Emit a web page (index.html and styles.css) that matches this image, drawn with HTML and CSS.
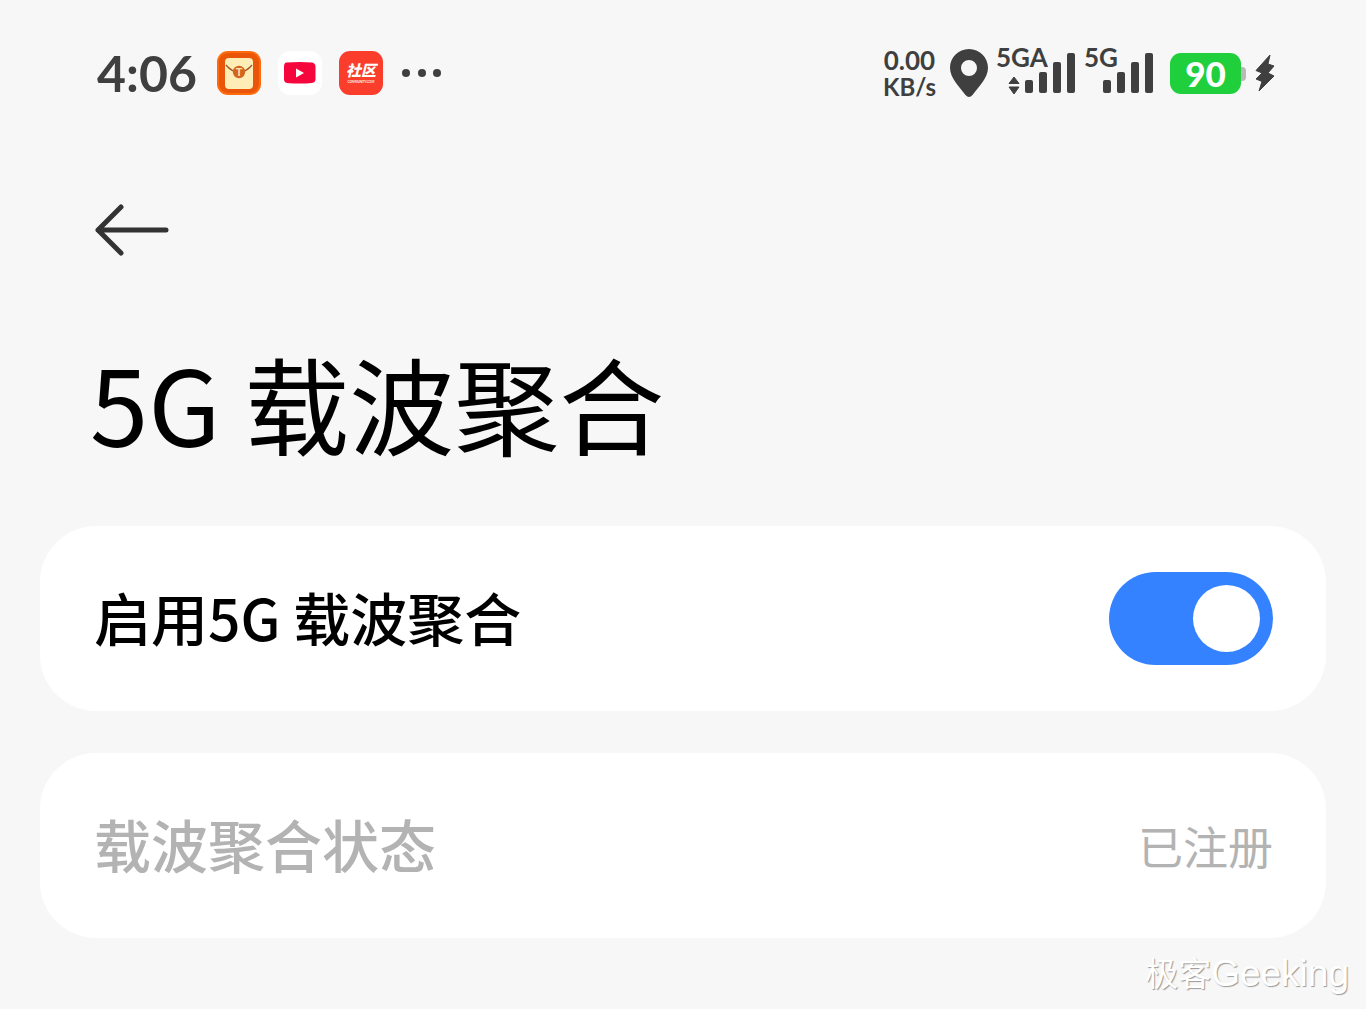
FILE: index.html
```html
<!DOCTYPE html>
<html lang="zh-CN">
<head>
  <meta charset="UTF-8" />
  <meta name="viewport" content="width=device-width, initial-scale=1" />
  <title>5G 载波聚合</title>
  <link rel="stylesheet" href="styles.css">
</head>
<body>

<div class="status-bar">
  <div class="status-left">
    <span class="time">4:06</span>
    <div class="app-icons">
      <svg width="44" height="44" viewBox="0 0 44 44" aria-hidden="true">
        <rect width="44" height="44" rx="11" fill="#ff6a0c"/>
        <rect x="2" y="2" width="40" height="40" rx="9" fill="#e9560a"/>
        <rect x="8" y="7" width="28" height="31" rx="4" fill="#ffedb8"/>
        <path d="M9 14c4 5 8 7 13 7s9-2 13-7" fill="none" stroke="#9a5a28" stroke-width="1.3"/>
        <circle cx="22" cy="21" r="6.2" fill="#d2661c"/>
        <text x="22" y="25" text-anchor="middle" font-size="11" fill="#ffe2ae">T</text>
      </svg>
      <svg width="44" height="44" viewBox="0 0 44 44" aria-hidden="true">
        <rect width="44" height="44" rx="12" fill="#fff"/>
        <path d="M8 11.5Q22 10.5 34 11.5Q37.5 12 37.5 16V28Q37.5 31.5 34 32Q22 33 9 32Q6 31.500 6 28V16Q6 12 8 11.5z" fill="#f5063c"/>
        <path d="M18 17.5v9l8-4.500z" fill="#fff"/>
      </svg>
      <div class="community">
        <b>社区</b>
        <small>COMMUNITY.COM</small>
      </div>
    </div>
    <svg width="40" height="8" viewBox="0 0 40 8" fill="#3f3f3f" aria-hidden="true">
      <circle cx="4" cy="4" r="4"/><circle cx="20" cy="4" r="4"/><circle cx="35" cy="4" r="4"/>
    </svg>
  </div>

  <div class="status-right">
    <div class="speed"><span>0.00</span><span>KB/s</span></div>
    <svg class="pin" width="38" height="48" viewBox="0 0 38 48" aria-hidden="true">
      <path fill-rule="evenodd" d="M19 0C8.5 0 0 8.3 0 18.8C0 29 9.500 38 15.5 46Q19 50 22.5 46C28.5 38 38 29 38 18.8C38 8.3 29.5 0 19 0zM19 11a8 8 0 1 1 0 16a8 8 0 1 1 0-16z" fill="#3f3f3f"/>
    </svg>
    <div class="signal signal-main">
      <span>5GA</span>
      <svg width="68" height="42" viewBox="0 0 68 42" fill="#3f3f3f" aria-hidden="true">
        <path d="M1 31.5L6 25l5 6.500zM1 35h10l-5 7z" stroke="#3f3f3f" stroke-width="1" stroke-linejoin="round"/>
        <rect x="17" y="28" width="8" height="13" rx="2"/>
        <rect x="31" y="20" width="8" height="21" rx="2"/>
        <rect x="45" y="10" width="8" height="31" rx="2"/>
        <rect x="59" y="1" width="8" height="40" rx="2"/>
      </svg>
    </div>
    <div class="signal">
      <span>5G</span>
      <svg width="52" height="42" viewBox="0 0 52 42" fill="#3f3f3f" aria-hidden="true">
        <rect x="1" y="28" width="8" height="13" rx="2"/>
        <rect x="15" y="20" width="8" height="21" rx="2"/>
        <rect x="29" y="10" width="8" height="31" rx="2"/>
        <rect x="43" y="1" width="8" height="40" rx="2"/>
      </svg>
    </div>
    <div class="battery"><span>90</span></div>
    <svg width="20" height="40" viewBox="0 0 20 40" aria-hidden="true">
      <path d="M15 2L1 17.5l6 2.500L1 26l6 2.500L4 38L19 23l-6-3L19 13l-6-2z" fill="#3f3f3f" stroke="#3f3f3f" stroke-width="1" stroke-linejoin="round"/>
    </svg>
  </div>
</div>

<header>
  <button class="back" type="button" aria-label="返回">
    <svg width="74" height="52" viewBox="0 0 74 52" fill="none" stroke="#333" stroke-width="5" stroke-linecap="round" stroke-linejoin="round" aria-hidden="true">
      <path d="M26 3L3 26l23 23M3 26h68"/>
    </svg>
  </button>
  <h1>5G 载波聚合</h1>
</header>

<main>
  <div class="card">
    <label for="ca-switch">启用5G 载波聚合</label>
    <input class="switch" type="checkbox" role="switch" id="ca-switch" checked>
  </div>
  <div class="card disabled">
    <span>载波聚合状态</span>
    <span class="value">已注册</span>
  </div>
</main>

<footer>极客<span>Geeking</span></footer>

</body>
</html>
```
FILE: styles.css
```css
* {
  box-sizing: border-box;
}

body {
  margin: 0;
  background: #f7f7f7;
  color: #000;
  font-family: 'Noto Sans CJK SC', sans-serif;
}

.status-bar {
  display: flex;
  justify-content: space-between;
  align-items: center;
  height: 146px;
  padding: 0 91px 0 97px;
  color: #3f3f3f;
  font-family: 'Lato', 'Noto Sans CJK SC', sans-serif;
  font-weight: bold;
}

.status-left,
.status-right,
.app-icons {
  display: flex;
  align-items: center;
}

.time {
  font-size: 50px;
  line-height: 60px;
}

.app-icons {
  gap: 17px;
  margin: 0 19px 0 20px;
}

.community {
  display: flex;
  flex-direction: column;
  align-items: center;
  justify-content: center;
  width: 44px;
  height: 44px;
  border-radius: 11px;
  background: #fb3d2c;
  color: #fff;
  font-style: italic;
}

.community b {
  font-size: 15px;
  line-height: 18px;
}

.community small {
  font-size: 3px;
  line-height: 6px;
  font-style: normal;
}

.speed {
  display: flex;
  flex-direction: column;
  align-items: center;
  font-size: 26px;
  line-height: 28px;
}

.speed span + span {
  font-size: 24px;
  line-height: 26px;
}

.pin {
  margin: 0 8px 0 14px;
}

.signal {
  position: relative;
  display: flex;
  justify-content: flex-end;
  width: 70px;
}

.signal-main {
  width: 80px;
  margin-right: 8px;
}

/* network type sits over the low bars */
.signal span {
  position: absolute;
  left: 0;
  top: -8px;
  font-size: 26px;
  line-height: 27px;
}

.battery {
  position: relative;
  width: 71px;
  height: 41px;
  margin: 0 14px 0 16px;
  border-radius: 11px;
  background: #20cf3c;
  color: #fff;
  font-size: 35px;
  font-weight: 900;
  line-height: 41px;
  text-align: center;
}

.battery::after {
  content: '';
  position: absolute;
  left: 71px;
  top: 14px;
  width: 5px;
  height: 14px;
  border-radius: 0 4px 4px 0;
  background: #b9b9b9;
}

header {
  padding: 58px 90px 0;
}

.back {
  display: block;
  margin-left: 5px;
  padding: 0;
  border: none;
  background: none;
  cursor: pointer;
}

.back svg {
  display: block;
}

h1 {
  margin: 66px 0 46px;
  font-size: 105px;
  line-height: 158px;
  font-weight: 400;
}

main {
  display: flex;
  flex-direction: column;
  gap: 42px;
  padding: 0 40px;
}

.card {
  display: flex;
  justify-content: space-between;
  align-items: center;
  height: 185px;
  padding: 0 53px 0 54px;
  border-radius: 56px;
  background: #fff;
  font-size: 57px;
  font-weight: 500;
}

.card > :first-child {
  padding-bottom: 6px;
}

.disabled {
  color: #b3b3b3;
}

.value {
  font-size: 45px;
  font-weight: 400;
}

.switch {
  appearance: none;
  display: flex;
  align-items: center;
  justify-content: flex-end;
  width: 164px;
  height: 93px;
  margin: 0;
  padding: 13px;
  border-radius: 47px;
  background: #3482ff;
  cursor: pointer;
}

.switch::before {
  content: '';
  width: 67px;
  height: 67px;
  border-radius: 50%;
  background: #fff;
}

.switch:not(:checked) {
  justify-content: flex-start;
  background: #e0e0e0;
}

footer {
  padding: 8px 17px 0;
  color: #fff;
  font-size: 33px;
  line-height: 52px;
  text-align: right;
  text-shadow: 1px 1px 1px #999;
}

footer span {
  font-family: 'Liberation Sans', sans-serif;
  font-size: 37px;
}
```
